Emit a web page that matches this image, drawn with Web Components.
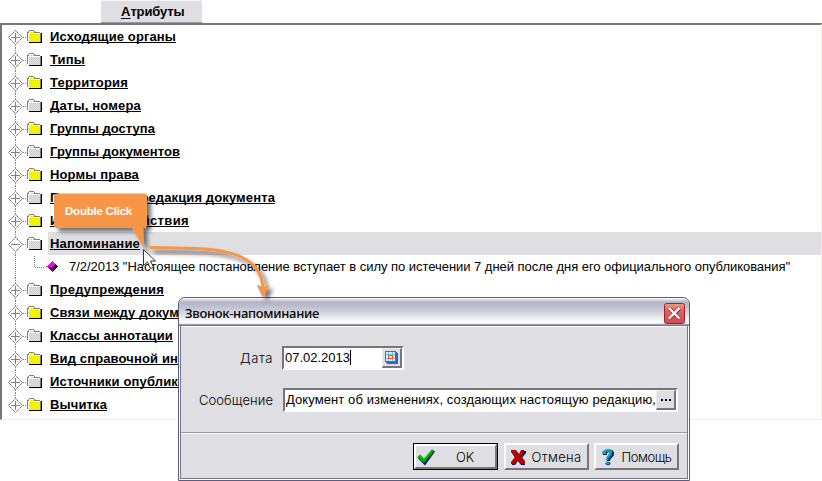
<!DOCTYPE html>
<html lang="ru"><head><meta charset="utf-8"><title>Атрибуты</title>
<style>
html,body{margin:0;width:822px;height:481px;overflow:hidden;background:#fff;color:#000;font:13px/17px "Liberation Sans",sans-serif}
</style></head><body>
<attributes-page></attributes-page>
<script>
const define=(name,html,setup)=>{
  const t=document.createElement('template');t.innerHTML=html;
  customElements.define(name,class extends HTMLElement{
    connectedCallback(){
      if(this.shadowRoot)return;
      this.attachShadow({mode:'open'}).append(t.content.cloneNode(true));
      if(setup)setup.call(this,this.shadowRoot);
    }
  });
};

/* Spaces its letters so that the line is exactly "w" pixels wide. */
define('fit-text',`<style>:host{display:block;white-space:pre}span{display:inline-block}</style><span></span>`,function(r){
  const s=r.querySelector('span'),text=this.getAttribute('text'),w=+this.getAttribute('w');
  s.textContent=text;
  s.style.letterSpacing=((w-s.getBoundingClientRect().width)/text.length)+'px';
});

define('folder-icon',`<style>:host{display:block;width:17px;height:14px}svg{display:block}</style>
<svg width="17" height="14" shape-rendering="crispEdges">
<defs><pattern id="p" width="2" height="2" patternUnits="userSpaceOnUse"><rect width="2" height="2" fill="#ff0"/><rect width="1" height="1" fill="#c8c8c8"/><rect x="1" y="1" width="1" height="1" fill="#d4d4d4"/></pattern></defs>
<path d="M2 13h13V3h-1v9H2z" fill="#000"/>
<path d="M0 2h1V1h1V0h5v1h1v1h5v1h1v9H1v-1H0z" fill="#808080"/>
<path d="M1 3h1V1h5v2h6v9H1z" fill="#fff"/>
<path d="M2 4h11v8H2zM3 2h4v1H3z" fill="url(#p)"/></svg>`);

define('tree-node',`<style>:host{display:grid;grid-template-columns:25px 21px 1fr;height:23px;align-items:center}
.t{width:25px;height:23px;display:block}
.c{height:23px;display:flex;align-items:flex-start;padding-left:2px;box-sizing:border-box;padding-top:4px}
:host([selected]) .c{background:#dfdee3}
.u{height:13px;border-bottom:1px solid #000;line-height:15px;font-weight:bold}
</style>
<svg class="t" shape-rendering="crispEdges"><path class="v" stroke="#808080" stroke-dasharray="1 1" fill="none"/>
<path d="M13.500 5.500L6.500 12.500L13.500 19.500L20.500 12.500Z" fill="#fff" stroke="#606060" stroke-dasharray="1.400 .6" shape-rendering="auto"/>
<path d="M9 12.500h9M21 12.500h1M23 12.500h1" stroke="#808080"/><path class="plus" d="M13.500 8v9" stroke="#808080"/></svg>
<folder-icon></folder-icon><div class="c"><div class="u"></div></div>`,function(r){
  r.querySelector('.v').setAttribute('d',(this.hasAttribute('first')?'':'M13.5 0v6')+(this.hasAttribute('last')?'':'M13.5 20v3'));
  if(this.hasAttribute('open'))r.querySelector('.plus').remove();
  const f=document.createElement('fit-text');f.setAttribute('text',this.getAttribute('text'));f.setAttribute('w',this.getAttribute('w'));
  r.querySelector('.u').append(f);
});

define('tree-leaf',`<style>:host{display:flex;height:23px;align-items:center}svg{flex:none}</style>
<svg width="67" height="23" shape-rendering="crispEdges"><path d="M13.500 0v23M32.500 1v11M33 12.500h9" fill="none" stroke="#808080" stroke-dasharray="1 1"/>
<path d="M50.500 6l6 5.500-6 5.500-6-5.500z" fill="#000"/><path d="M50.500 6v5.500h-6zM50.500 6l3 3-3 3z" fill="#f0f"/><path d="M44.500 11.500h6V17z" fill="#800080"/></svg>
<fit-text text='7/2/2013 "Настоящее постановление вступает в силу по истечении 7 дней после дня его официального опубликования"' w="721"></fit-text>`);

define('attribute-tree',`<style>:host{display:block;box-sizing:border-box;height:397px;border:solid;border-width:2px 1px 1px 2px;border-color:#77757a #efefe4 #efefe4 #77757a}
</style><slot></slot>`);

define('tab-button',`<style>:host{display:flex;box-sizing:border-box;width:101px;height:23px;margin-left:101px;background:#dfdee3;border-bottom:1px solid #9a99a2;border-top:1px solid #f4f4f6;font-weight:bold;padding-left:20px}
.a{display:flex;line-height:22px}.a u{text-underline-offset:2px}</style><div class="a"><u>А</u><fit-text text="трибуты" w="54"></fit-text></div>`);

define('push-button',`<style>:host{display:flex;box-sizing:border-box;width:85px;height:27px;align-items:center;background:#dfdee3;border:2px solid;border-color:#fff #77757a #77757a #fff;color:#000;font:13px/17px Inter,sans-serif;font-weight:300}
:host([main]){outline:1px solid #000;outline-offset:-1px;border-width:3px}
.l{flex:1;display:flex;justify-content:center;padding:2px 4px 0 0}</style>
<slot></slot><div class="l"></div>`,function(r){
  const f=document.createElement('fit-text');f.setAttribute('text',this.getAttribute('text'));f.setAttribute('w',this.getAttribute('w'));
  r.querySelector('.l').append(f);
});

define('edit-field',`<style>:host{display:flex;box-sizing:border-box;height:24px;border:2px solid;border-color:#77757a #fff #fff #77757a;background:#fff;justify-content:space-between}
.b{box-sizing:border-box;width:20px;height:20px;background:#dfdee3;border:solid;border-width:1px 2px 2px 1px;border-color:#f0efe6 #77757a #77757a #f0efe6;display:flex;align-items:center;justify-content:center}</style>
<slot></slot><div class="b"><slot name="button"></slot></div>`);

define('reminder-dialog',`<style>
:host{position:absolute;left:178px;top:297px;width:512px;height:184px;box-sizing:border-box;display:flex;flex-direction:column;background:#dfdee3;border:1px solid #5d5c7c;border-radius:7px 7px 0 0;box-shadow:inset 0 0 0 1px #fff,inset 0 0 0 2px #77768f;overflow:hidden}
header{box-sizing:border-box;height:28px;display:flex;align-items:center;justify-content:space-between;padding:3px 4px 0 6px;background:linear-gradient(#fff 0,#b3b2c8 4px,#c0c0d0 9px,#e6e6ed 19px,#fff 25px,#d0d0dc 26px,#73728f 27px);border-radius:6px 6px 0 0;font:500 13px/18px "Noto Sans",sans-serif}
header fit-text{margin-top:-2px}
header svg{display:block}
main{height:107px;box-sizing:border-box;margin:0 2px;padding:19px 10px 0 9px;border-top:1px solid #fff;border-bottom:1px solid #96959f;display:grid;grid-template-columns:83px 1fr;grid-template-rows:24px 24px;row-gap:18px}
.label{font:300 13px/25px Inter,sans-serif;justify-self:end}
.f{padding-left:10px;display:flex}
.date{width:122px;margin-left:-1px}.msg{width:395px}
.caret{display:flex}.caret:after{content:"";width:1px;height:15px;margin-top:2px;background:#000}
footer{display:flex;justify-content:flex-end;border-top:1px solid #fff;margin:0 2px;padding:9px 8px 0 0;height:35px}
footer push-button+push-button{margin-left:6px}footer push-button:last-child{margin-left:5px}
.field-text{line-height:20px;padding-left:1px}
.icon{width:24px;height:22px;flex:none;margin-top:-1px}
</style>
<header><fit-text text="Звонок-напоминание" w="134"></fit-text>
<svg width="21" height="21"><defs><linearGradient id="r" x2="0" y2="1"><stop stop-color="#e89c86"/><stop offset=".35" stop-color="#df6260"/><stop offset="1" stop-color="#d34b50"/></linearGradient></defs><rect x=".5" y=".5" width="20" height="20" rx="2" fill="url(#r)" stroke="#98212c"/><path d="M5.500 5.500l10 10m0-10l-10 10" stroke="#8f2535" stroke-width="3.500"/><path d="M5 5l10.500 10.500m0-10.500L5 15.500" stroke="#fff" stroke-width="2.300"/></svg></header>
<main><fit-text class="label" text="Дата" w="33"></fit-text><div class="f"><edit-field class="date"><div class="caret"><fit-text class="field-text" text="07.02.2013" w="65"></fit-text></div>
<svg slot="button" width="15" height="15" shape-rendering="crispEdges"><path d="M2 2h12v12H2z" fill="#3265c8"/><path d="M1 1h11v11H1z" fill="#3f76a8"/><path d="M2 2h9v9H2z" fill="#d9f0fa"/><path d="M4.500 2v9M8.500 2v9M2 4.500h9M2 8.500h9" stroke="#83bde0"/><path d="M4.500 5.500h4v3h-4z" fill="#fff" stroke="#ff4d15"/><path d="M0 13h3v2H0zM13 0h2v3h-2z" fill="#dfdee3"/></svg></edit-field></div>
<fit-text class="label" text="Сообщение" w="74"></fit-text><div class="f"><edit-field class="msg"><fit-text class="field-text" text="Документ об изменениях, создающих настоящую редакцию," w="370"></fit-text>
<svg slot="button" width="12" height="14" shape-rendering="crispEdges"><path d="M1 6h2v2H1zM5 6h2v2H5zM9 6h2v2H9z"/></svg></edit-field></div></main>
<footer>
<push-button main text="OK" w="18"><svg class="icon" style="margin-left:-1px"><path d="M3 13.500l3-3 3 4 8-10 3 2-10 14z" fill="#101c60"/><path d="M2 12.500l3-3 4 4 8-9 2 1.500L9 18z" fill="#00a800"/><path d="M3 12.500l2-2 4 4 8-9" fill="none" stroke="#00d000"/></svg></push-button>
<push-button text="Отмена" w="50"><svg class="icon"><path d="M5 6h5l3 4 3-4h4v2l-4 5 3 4v3h-4l-3-4-3 4H6v-3l3-4z" fill="#14115a"/><path d="M5 5h5l3 4 2-4h3v1l-3 5 4 5v3h-4l-3-4-3 4H5v-2l4-5-4-5z" fill="#b50000"/></svg></push-button>
<push-button text="Помощь" w="50"><svg class="icon"><path d="M7 10c-1-7 12-7 11-1 0 3-4 4-4 7h-3c0-4 3-5 3-7 0-3-4-2-3 1z" fill="#172069"/><path d="M6 9c0-6 11-6 10-1 0 3-4 4-4 7h-2c0-4 3-5 3-7 0-3-4-2-3 1z" fill="#08a8b5"/><ellipse cx="12" cy="18.500" rx="2.500" ry="1.800" fill="#172069"/><ellipse cx="11.500" cy="18" rx="2" ry="1.500" fill="#08a8b5"/></svg></push-button>
</footer>`);

define('click-hint',`<style>:host{position:absolute;left:0;top:0;width:822px;height:481px;pointer-events:none}
svg{position:absolute;left:0;top:0}
.text{position:absolute;left:65px;top:203px;color:#fff;font-weight:bold;font-size:11.5px}</style>
<svg width="822" height="481"><defs><filter id="s" x="-20%" y="-30%" width="150%" height="180%"><feDropShadow dx="4" dy="4" stdDeviation="2" flood-color="#000" flood-opacity=".55"/></filter></defs>
<g filter="url(#s)"><path d="M57 193.500h87q3 0 3 3V225q0 3-4 3l1 20-12-20H57q-3 0-3-3v-28.500q0-3 3-3z" fill="#f79646"/></g>
<g filter="url(#s)"><path d="M151 247.500c56 1 111-2 112 42" fill="none" stroke="#f79646" stroke-width="3" stroke-linecap="round"/><path d="M257.500 285.500l5.500 2 5.500-2-5.500 11z" fill="#f79646" stroke="#f79646"/></g>
<path d="M143.500 249.500v16l4-3.500 3 6.500 3-1.300-3-6.200h5z" fill="#fff" stroke="#333" stroke-width="1"/></svg>
<div class="text"><fit-text text="Double Click" w="67"></fit-text></div>`);

define('attributes-page',`<style>:host{display:block;width:822px;height:481px}</style>
<tab-button></tab-button>
<attribute-tree>
<tree-node first text="Исходящие органы" w="126"></tree-node>
<tree-node text="Типы" w="35"></tree-node>
<tree-node text="Территория" w="78"></tree-node>
<tree-node text="Даты, номера" w="91"></tree-node>
<tree-node text="Группы доступа" w="105"></tree-node>
<tree-node text="Группы документов" w="130"></tree-node>
<tree-node text="Нормы права" w="89"></tree-node>
<tree-node text="Предыдущая редакция документа" w="225"></tree-node>
<tree-node text="Источники действия" w="139"></tree-node>
<tree-node open selected text="Напоминание" w="90"></tree-node>
<tree-leaf></tree-leaf>
<tree-node text="Предупреждения" w="114"></tree-node>
<tree-node text="Связи между докум" w="129"></tree-node>
<tree-node text="Классы аннотации" w="123"></tree-node>
<tree-node text="Вид справочной ин" w="128"></tree-node>
<tree-node text="Источники опублик" w="128"></tree-node>
<tree-node last text="Вычитка" w="57"></tree-node>
</attribute-tree>
<reminder-dialog></reminder-dialog>
<click-hint></click-hint>`);
</script></body></html>
